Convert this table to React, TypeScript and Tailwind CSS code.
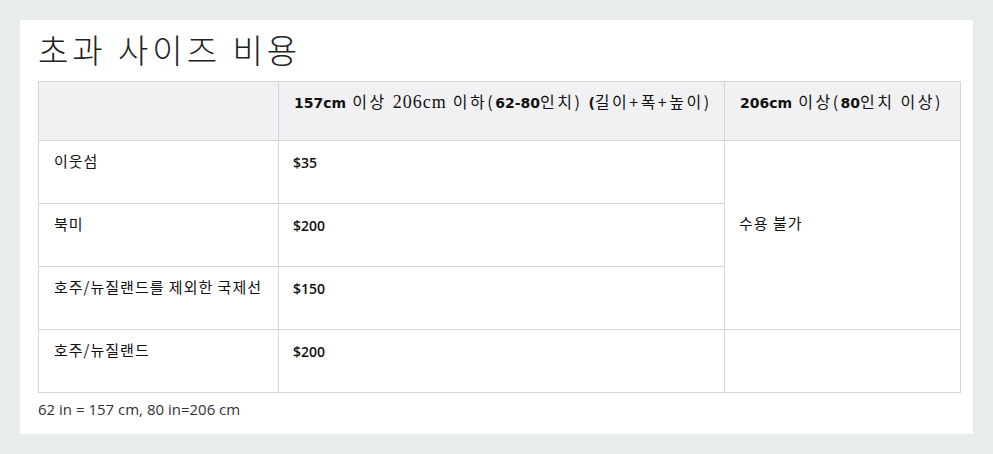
const ko = "font-['Noto_Sans_CJK_KR',sans-serif]";
const bold = "font-['DejaVu_Sans','Noto_Sans_CJK_KR',sans-serif] font-bold tracking-normal";
const serif = "font-['Liberation_Serif',serif]";

const rows = [
  { name: "이웃섬", price: "$35" },
  { name: "북미", price: "$200" },
  { name: "호주/뉴질랜드를 제외한 국제선", price: "$150" },
  { name: "호주/뉴질랜드", price: "$200" },
];

export default function App() {
  return (
    <div className="min-h-screen w-full bg-[#e9ecec] pt-5 pl-5">
      <div className="w-[953px] h-[414px] bg-white pl-[18px] pt-[3px]">
        <h1 className={`${ko} text-[33px] leading-[52px] mb-[6px] font-light text-[#222] tracking-[4px]`}>
          초과 사이즈 비용
        </h1>
        <table className="w-[922px] border-collapse text-[#111] table-fixed">
          <colgroup>
            <col className="w-[240px]" />
            <col className="w-[446px]" />
            <col className="w-[236px]" />
          </colgroup>
          <thead>
            <tr className="h-[59px] bg-[#f1f1f3]">
              <th className="border border-[#d6d6da]" />
              <th className={`border border-[#d6d6da] text-left align-top pl-[15px] pt-[7px] text-[16px] tracking-[2.5px] font-normal ${ko}`}>
                <span className={`${bold} text-[14px]`}>157cm</span> 이상{" "}
                <span className={`${serif} text-[18px] tracking-[1px]`}>206cm</span> 이하(
                <span className={`${bold} text-[14px]`}>62-80</span>인치){" "}
                <span className={`${bold} text-[14px]`}>(</span>길이+폭+높이)
              </th>
              <th className={`border border-[#d6d6da] text-left align-top pl-[15px] pt-[7px] text-[16px] tracking-[2.5px] font-normal ${ko}`}>
                <span className={`${bold} text-[14px]`}>206cm</span> 이상(
                <span className={`${bold} text-[14px]`}>80</span>인치 이상)
              </th>
            </tr>
          </thead>
          <tbody>
            {rows.map((r, i) => (
              <tr key={i} className="h-[63px]">
                <td className={`border border-[#d6d6da] align-top pl-[15px] pt-[9px] text-[15px] tracking-[1px] ${ko}`}>
                  {r.name}
                </td>
                <td className="border border-[#d6d6da] align-top pl-[14px] pt-[11px] text-[14px] font-semibold font-['Open_Sans',sans-serif]">
                  {r.price}
                </td>
                {i === 0 && (
                  <td rowSpan={3} className={`border border-[#d6d6da] align-top pl-[14px] pt-[71px] text-[15px] tracking-[1px] ${ko}`}>
                    수용 불가
                  </td>
                )}
                {i === 3 && <td className="border border-[#d6d6da]" />}
              </tr>
            ))}
          </tbody>
        </table>
        <p className="mt-[5px] text-[15px] text-[#333] font-['Open_Sans',sans-serif]">
          62 in = 157 cm, 80 in=206 cm
        </p>
      </div>
    </div>
  );
}
